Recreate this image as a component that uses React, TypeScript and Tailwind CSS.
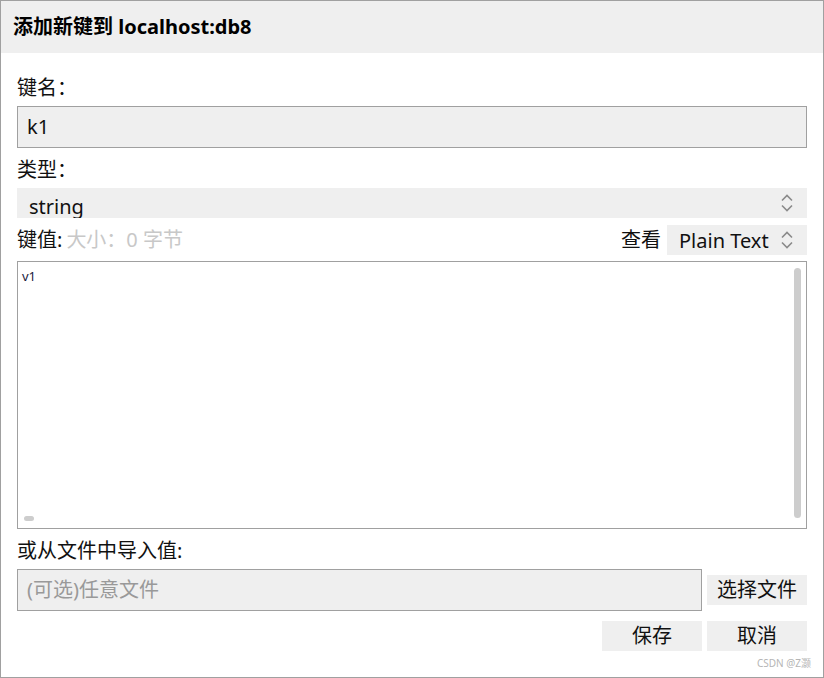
import React from 'react';

const font = { fontFamily: '"Noto Sans", "Noto Sans CJK SC", sans-serif' };

const Chevrons = () => (
  <svg width="14" height="22" viewBox="0 0 14 22" fill="none" stroke="#8a8a8a" strokeWidth="1.6">
    <path d="M2 8.5 L7 3.5 L12 8.5" />
    <path d="M2 13.5 L7 18.5 L12 13.5" />
  </svg>
);

const App = () => {
  return (
    <div
      className="w-[824px] h-[678px] border border-[#a0a0a0] bg-white flex flex-col text-[#111]"
      style={font}
    >
      {/* Title bar */}
      <div className="h-[52px] bg-[#efefef] flex items-center px-[12px] shrink-0">
        <span className="text-[20px] font-bold text-black">添加新键到 localhost:db8</span>
      </div>

      <div className="flex flex-col px-[16px]">
        <div className="mt-[23px] h-[24px] flex items-center text-[20px]">键名：</div>
        <div className="mt-[6px] h-[42px] border border-[#a0a0a0] bg-[#efefef] flex items-center pl-[9px] text-[20px]">
          k1
        </div>

        <div className="mt-[10px] h-[24px] flex items-center text-[20px]">类型：</div>
        <div className="mt-[6px] h-[30px] bg-[#efefef] flex overflow-hidden relative">
          <span className="pl-[12px] pt-[4px] leading-[30px] text-[20px]">string</span>
          <div className="absolute right-[13px] top-[4px]">
            <Chevrons />
          </div>
        </div>

        <div className="mt-[7px] h-[30px] flex items-center">
          <span className="text-[20px]">键值:</span>
          <span className="text-[20px] text-[#c8c8c8] ml-[4px]">大小：0 字节</span>
          <span className="ml-auto text-[20px] mr-[6px]">查看</span>
          <div className="w-[140px] h-[30px] bg-[#efefef] flex items-center pl-[12px] pr-[13px]">
            <span className="text-[20px] pt-[2px]">Plain Text</span>
            <div className="ml-auto">
              <Chevrons />
            </div>
          </div>
        </div>

        <div className="mt-[6px] h-[268px] border border-[#a0a0a0] bg-white flex relative">
          <span className="pl-[4px] pt-[6px] text-[13px] leading-[16px] text-[#1a1a40]">v1</span>
          <div className="absolute right-[5px] top-[6px] w-[7px] h-[250px] rounded-full bg-[#cdcdcd]" />
          <div className="absolute left-[6px] bottom-[7px] w-[10px] h-[5px] rounded-full bg-[#cdcdcd]" />
        </div>

        <div className="mt-[10px] h-[24px] flex items-center text-[20px]">或从文件中导入值:</div>
        <div className="mt-[6px] flex items-center gap-[5px]">
          <div className="w-[685px] h-[42px] border border-[#a0a0a0] bg-[#efefef] flex items-center pl-[9px] text-[20px] text-[#999]">
            (可选)任意文件
          </div>
          <button className="w-[100px] h-[30px] bg-[#efefef] text-[20px]">选择文件</button>
        </div>

        <div className="mt-[10px] flex justify-end gap-[5px]">
          <button className="w-[100px] h-[30px] bg-[#efefef] text-[20px]">保存</button>
          <button className="w-[100px] h-[30px] bg-[#efefef] text-[20px]">取消</button>
        </div>

        <div className="mt-[6px] flex justify-end mr-[-4px]">
          <span className="text-[10px] text-[#b5b5b5] leading-[12px]">CSDN @Z灏</span>
        </div>
      </div>
    </div>
  );
};

export default App;
